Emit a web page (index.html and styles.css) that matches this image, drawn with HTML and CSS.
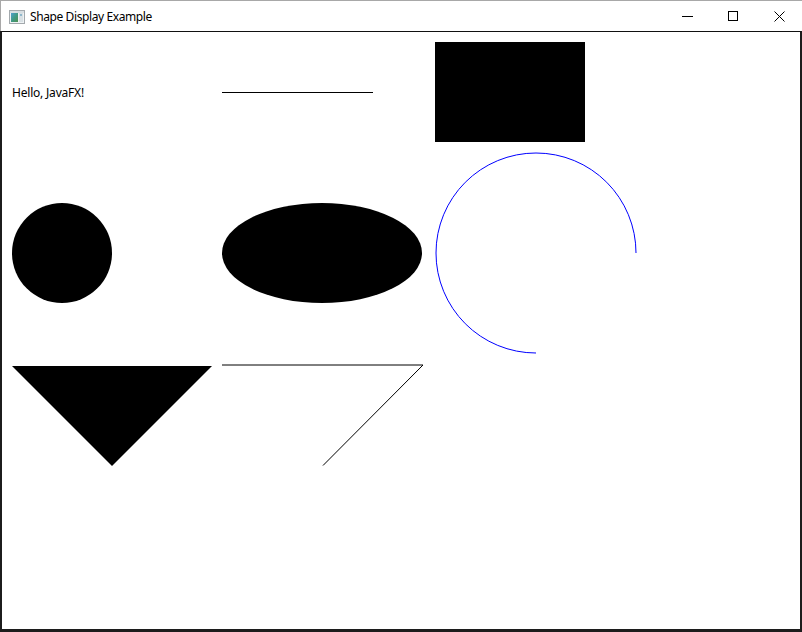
FILE: index.html
```html
<!DOCTYPE html>
<html>
<head>
<meta charset="utf-8">
<title>Shape Display Example</title>
<link rel="stylesheet" href="styles.css">
</head>
<body>
<div class="window">
  <div class="titlebar">
    <svg class="app-icon" width="16" height="14" viewBox="0 0 16 14">
      <defs>
        <linearGradient id="ig" x1="0" y1="0" x2="1" y2="1">
          <stop offset="0" stop-color="#4f9fd0"/>
          <stop offset="0.5" stop-color="#3f9a86"/>
          <stop offset="1" stop-color="#4f8f4f"/>
        </linearGradient>
      </defs>
      <rect x="0.5" y="0.5" width="15" height="13" fill="#eef2f4" stroke="#a3a9ad"/>
      <rect x="1" y="1" width="14" height="2" fill="#d6dde1"/>
      <rect x="2" y="3" width="7" height="9" fill="url(#ig)"/>
      <rect x="10" y="3" width="4" height="9" fill="#d8e0e4"/>
      <rect x="11" y="4" width="2" height="2" fill="#8fb7cc"/>
    </svg>
    <span class="title">Shape Display Example</span>
    <div class="controls">
      <div class="ctl"><span class="min-glyph"></span></div>
      <div class="ctl"><span class="max-glyph"></span></div>
      <div class="ctl">
        <svg width="11" height="11" viewBox="0 0 11 11"><path d="M0.5 0.5 L10.5 10.5 M10.5 0.5 L0.5 10.5" stroke="#000" stroke-width="1" fill="none"/></svg>
      </div>
    </div>
  </div>
  <div class="content">
    <div class="grid">
      <span class="hello">Hello, JavaFX!</span>
      <div class="hline"></div>
      <div class="rect"></div>

      <svg class="cell" width="200" height="202" viewBox="0 0 200 202"><circle cx="50" cy="101" r="50" fill="#000"/></svg>
      <svg class="cell" width="203" height="202" viewBox="0 0 203 202"><ellipse cx="100" cy="101" rx="100" ry="50" fill="#000"/></svg>
      <svg class="cell" width="203" height="202" viewBox="0 0 203 202"><path d="M201 101 A100 100 0 1 0 101 201" stroke="#0000ff" stroke-width="1" fill="none"/></svg>

      <svg class="cell" width="200" height="104" viewBox="0 0 200 104"><polygon points="0,2 200,2 100,102" fill="#000"/></svg>
      <svg class="cell" width="203" height="104" viewBox="0 0 203 104"><polyline points="0,1 201,1 101,101.5" stroke="#000" stroke-width="1" fill="none"/></svg>
      <div></div>
    </div>
  </div>
</div>
</body>
</html>
```
FILE: styles.css
```css
html, body {
  margin: 0;
  padding: 0;
  background: #fff;
}
body {
  width: 802px;
  height: 632px;
  overflow: hidden;
  font-family: "Noto Sans", "Open Sans", sans-serif;
}
.window {
  width: 802px;
  height: 632px;
  display: flex;
  flex-direction: column;
  box-sizing: border-box;
}
.titlebar {
  height: 31px;
  box-sizing: border-box;
  border-top: 1px solid #a8a8a8;
  border-left: 1px solid #a8a8a8;
  display: flex;
  align-items: center;
  padding-left: 8px;
  background: #fff;
}
.app-icon {
  display: block;
  margin-top: 1px;
}
.title {
  margin-left: 5px;
  font-size: 12px;
  line-height: 16px;
  letter-spacing: -0.4px;
  color: #000;
  margin-top: 1px;
}
.controls {
  margin-left: auto;
  display: flex;
  height: 100%;
}
.ctl {
  width: 46px;
  height: 100%;
  display: flex;
  align-items: center;
  justify-content: center;
}
.min-glyph {
  display: block;
  width: 11px;
  height: 1px;
  background: #000;
}
.max-glyph {
  display: block;
  width: 10px;
  height: 10px;
  box-sizing: border-box;
  border: 1px solid #000;
}
.ctl svg {
  display: block;
}
.content {
  flex: 1;
  border-top: 1px solid #111;
  border-left: 2px solid #1c1c1c;
  border-right: 2px solid #1c1c1c;
  border-bottom: 3px solid #1c1c1c;
  padding: 10px;
  background: #fff;
}
.grid {
  display: grid;
  grid-template-columns: 200px 203px auto;
  grid-template-rows: 100px 202px 102px;
  gap: 10px;
  align-items: start;
  justify-items: start;
}
.hello {
  align-self: center;
  font-family: "Noto Sans", sans-serif;
  font-size: 12px;
  line-height: 16px;
  letter-spacing: -0.2px;
  color: #000;
  margin-top: 1px;
}
.hline {
  width: 151px;
  height: 1px;
  background: #000;
  margin-top: 50px;
}
.rect {
  width: 150px;
  height: 100px;
  background: #000;
}
.cell {
  display: block;
  overflow: visible;
}
```
